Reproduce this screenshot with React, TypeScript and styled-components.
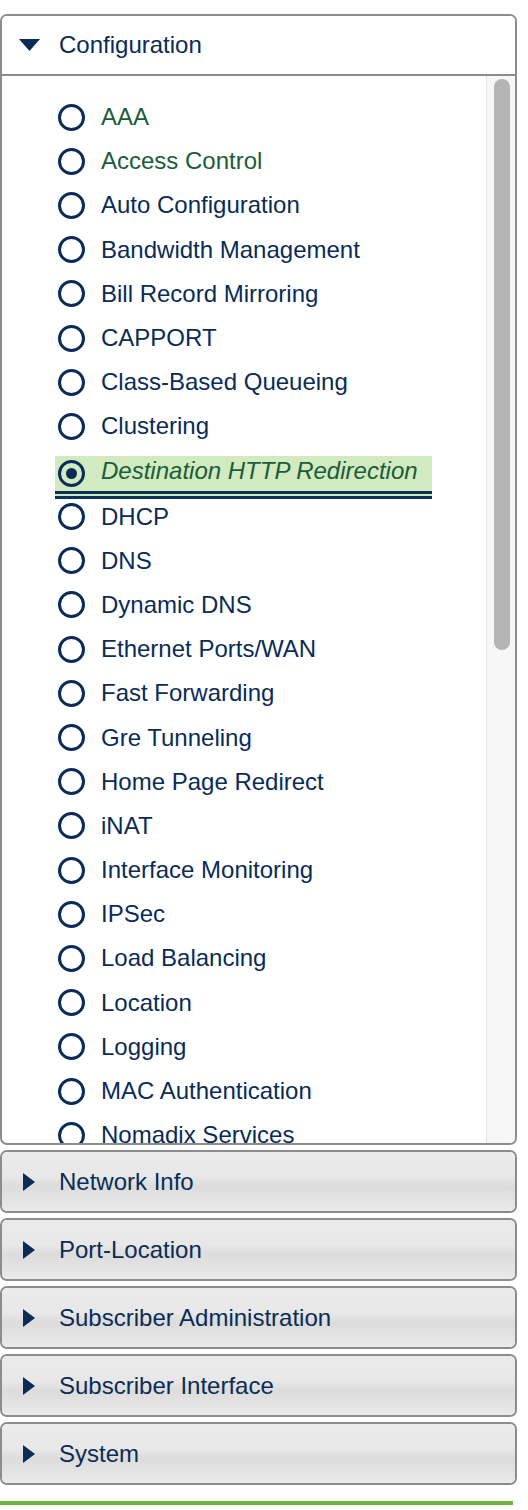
import React from 'react'
import styled, { createGlobalStyle } from 'styled-components'

const GlobalStyle = createGlobalStyle`
  html, body {
    margin: 0;
    padding: 0;
    background: #FFFFFF;
  }
  body {
    font-family: 'Liberation Sans', Arial, Helvetica, sans-serif;
    color: #0a2c57;
  }
`

const Page = styled.div`
  width: 517px;
  padding-top: 14px;
  display: flex;
  flex-direction: column;
  gap: 5px;
`

const Panel = styled.div`
  box-sizing: border-box;
  width: 517px;
  border: 2px solid #8a8c8e;
  border-radius: 7px;
  overflow: hidden;
  background: #FFFFFF;
`

const Header = styled.div<{ $open?: boolean }>`
  box-sizing: border-box;
  height: ${p => (p.$open ? '60px' : '59px')};
  display: flex;
  align-items: center;
  padding-left: 15px;
  gap: 18px;
  font-size: 24px;
  color: #0a2c57;
  background: ${p =>
    p.$open
      ? '#FFFFFF'
      : 'linear-gradient(to bottom, #ebebeb 0%, #e8e8e8 42%, #dcdcdc 58%, #e2e2e2 78%, #eaeaea 100%)'};
  border-bottom: ${p => (p.$open ? '2px solid #8a8c8e' : 'none')};
`

const CaretBox = styled.span`
  width: 24px;
  height: 24px;
  display: flex;
  align-items: center;
  justify-content: center;
`

const Body = styled.div`
  height: 1067px;
  display: flex;
`

const List = styled.div`
  flex: 1;
  overflow: hidden;
  padding-top: 19px;
`

const Row = styled.div<{ $selected?: boolean }>`
  height: ${p => (p.$selected ? '46px' : '44.2px')};
  display: flex;
  align-items: ${p => (p.$selected ? 'flex-start' : 'center')};
  padding-left: 53px;
`

const Item = styled.div<{ $selected?: boolean; $visited?: boolean }>`
  box-sizing: content-box;
  height: 35px;
  display: inline-flex;
  align-items: center;
  gap: 16px;
  padding: 0 14px 0 3px;
  margin-top: ${p => (p.$selected ? '7px' : '0')};
  font-size: 24px;
  white-space: nowrap;
  color: ${p => (p.$selected || p.$visited ? '#1b5c3a' : '#0a2c57')};
  font-style: ${p => (p.$selected ? 'italic' : 'normal')};
  background: ${p => (p.$selected ? '#d2eabf' : 'transparent')};
  border-bottom: ${p => (p.$selected ? '8px double #0b3358' : 'none')};
`

const Label = styled.span<{ $selected?: boolean }>`
  margin-bottom: ${p => (p.$selected ? '5px' : '0')};
`

const Radio = styled.span<{ $checked?: boolean }>`
  box-sizing: border-box;
  flex: none;
  width: 27px;
  height: 27px;
  border: 3.5px solid #0a2c57;
  border-radius: 50%;
  display: flex;
  align-items: center;
  justify-content: center;

  &::after {
    content: '';
    display: ${p => (p.$checked ? 'block' : 'none')};
    width: 11px;
    height: 11px;
    border-radius: 50%;
    background: #0a2c57;
  }
`

const ScrollTrack = styled.div`
  box-sizing: border-box;
  width: 29px;
  flex: none;
  background: #f7f7f7;
  border-left: 1px solid #e4e4e4;
  padding: 3px 5px 0 7px;
`

const ScrollThumb = styled.div`
  width: 16px;
  height: 571px;
  border-radius: 8px;
  background: #b5b5b5;
`

const GreenRule = styled.div`
  width: 513px;
  height: 4px;
  margin-top: 16px;
  background: #6cb33f;
`

const items = [
  'AAA',
  'Access Control',
  'Auto Configuration',
  'Bandwidth Management',
  'Bill Record Mirroring',
  'CAPPORT',
  'Class-Based Queueing',
  'Clustering',
  'Destination HTTP Redirection',
  'DHCP',
  'DNS',
  'Dynamic DNS',
  'Ethernet Ports/WAN',
  'Fast Forwarding',
  'Gre Tunneling',
  'Home Page Redirect',
  'iNAT',
  'Interface Monitoring',
  'IPSec',
  'Load Balancing',
  'Location',
  'Logging',
  'MAC Authentication',
  'Nomadix Services',
  'Passthrough Addresses',
  'PMS',
  'Quality of Service',
  'RADIUS',
  'Realm-Based Routing',
  'Routing',
  'Session Limits',
  'SMTP Redirection',
  'SNMP',
  'Static Port Mapping',
  'VLAN',
]

const visited = ['AAA', 'Access Control']
const selected = 'Destination HTTP Redirection'

const collapsed = [
  'Network Info',
  'Port-Location',
  'Subscriber Administration',
  'Subscriber Interface',
  'System',
]

const Caret: React.FC<{ open?: boolean }> = ({ open }) => (
  <CaretBox>
    {open ? (
      <svg width="21" height="12" viewBox="0 0 21 12">
        <polygon points="0,0 21,0 10.5,12" fill="#0a2c57" />
      </svg>
    ) : (
      <svg width="12" height="18" viewBox="0 0 12 18">
        <polygon points="0,0 12,9 0,18" fill="#0a2c57" />
      </svg>
    )}
  </CaretBox>
)

const App: React.FC = () => {
  return (
    <>
      <GlobalStyle />
      <Page>
        <Panel>
          <Header $open>
            <Caret open />
            <span>Configuration</span>
          </Header>
          <Body>
            <List>
              {items.map(name => (
                <Row key={name} $selected={name === selected}>
                  <Item $selected={name === selected} $visited={visited.includes(name)}>
                    <Radio $checked={name === selected} />
                    <Label $selected={name === selected}>{name}</Label>
                  </Item>
                </Row>
              ))}
            </List>
            <ScrollTrack>
              <ScrollThumb />
            </ScrollTrack>
          </Body>
        </Panel>

        {collapsed.map(name => (
          <Panel key={name}>
            <Header>
              <Caret />
              <span>{name}</span>
            </Header>
          </Panel>
        ))}
      </Page>
      <GreenRule />
    </>
  )
}

export default App
